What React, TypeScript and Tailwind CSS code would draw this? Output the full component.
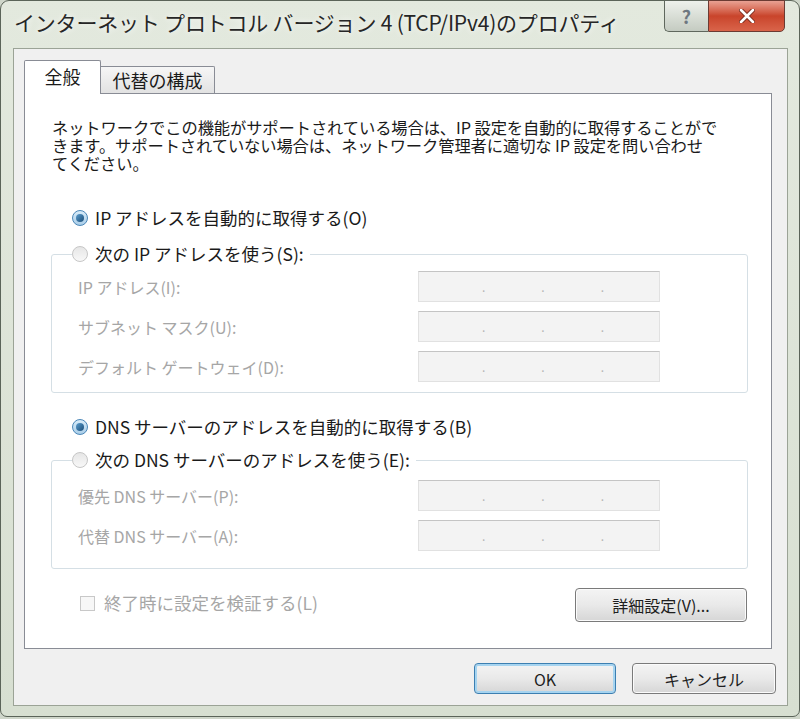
import React from 'react';

const FONT = "font-['Noto_Sans_CJK_JP','Noto_Sans',sans-serif]";

const Radio: React.FC<{ checked?: boolean }> = ({ checked }) =>
    checked ? (
        <span className="flex h-[16px] w-[16px] shrink-0 items-center justify-center rounded-full border border-[#4b87b8] bg-gradient-to-b from-[#d8ecf9] to-[#a9cde8]">
            <span className="h-[8px] w-[8px] rounded-full bg-gradient-to-br from-[#5a9ccc] to-[#1b4f7a]"></span>
        </span>
    ) : (
        <span className="h-[16px] w-[16px] shrink-0 rounded-full border border-[#c6c6c6] bg-gradient-to-b from-[#e6e6e6] to-[#f8f8f8]"></span>
    );

const IpBox: React.FC = () => (
    <div className="flex h-[31px] w-[242px] items-center border border-[#e1e1e1] border-t-[#c4c4c4] bg-[#f3f3f3] text-[12px] text-[#b5b5b5]">
        <span className="ml-[63px]">.</span>
        <span className="ml-[56px]">.</span>
        <span className="ml-[56px]">.</span>
    </div>
);

const Field: React.FC<{ label: string }> = ({ label }) => (
    <div className="flex items-center">
        <span className="w-[366px] pl-[26px] text-[16px] text-[#a6a6a6]">{label}</span>
        <IpBox />
    </div>
);

const Button: React.FC<{ label: string; primary?: boolean; className?: string }> = ({ label, primary, className }) => (
    <button
        className={`flex items-center justify-center rounded-[4px] border bg-gradient-to-b from-[#f4f4f4] via-[#e9e9e9] to-[#d6d6d6] text-[16px] text-[#1e1e1e] ${
            primary ? 'border-[#3c7fb1] shadow-[inset_0_0_0_2px_#a6d4f0]' : 'border-[#7a7a7a] shadow-[inset_0_0_0_1px_#fbfbfb]'
        } ${className ?? ''}`}
    >
        {label}
    </button>
);

export default function App() {
    return (
        <div className={`h-[719px] w-[800px] overflow-hidden bg-[#cfd6ca] ${FONT}`}>
            <div className="h-[717px] w-[800px] rounded-t-[9px] rounded-b-[7px] border border-[#5b6459] bg-gradient-to-b from-[#e3e9de] to-[#d7dfd1]">
                {/* title bar */}
                <div className="flex h-[47px] items-start justify-between">
                    <span className="mt-[6px] ml-[13px] whitespace-nowrap text-[21px] leading-[30px] tracking-[-0.2px] text-[#262626] [text-shadow:0_0_6px_#ffffff]">
                        インターネット プロトコル バージョン 4 (TCP/IPv4)のプロパティ
                    </span>
                    <div className="mr-[14px] flex h-[32px] -mt-px">
                        <div className="flex w-[44px] items-center justify-center rounded-bl-[5px] border border-r-0 border-[#5f675d] bg-gradient-to-b from-[#eef1ec] to-[#c4cbc1] text-[18px] font-bold text-[#6e7780]">
                            ?
                        </div>
                        <div className="flex w-[77px] items-center justify-center rounded-br-[5px] border border-[#6b3b33] bg-gradient-to-b from-[#e8a193] via-[#c9442b] to-[#d9644a] text-white">
                            <svg width="16" height="14" viewBox="0 0 16 14">
                                <path d="M2 1 L14 13 M14 1 L2 13" stroke="#7a2a1c" strokeWidth="4.5" strokeLinecap="round" />
                                <path d="M2 1 L14 13 M14 1 L2 13" stroke="#ffffff" strokeWidth="2.6" strokeLinecap="round" />
                            </svg>
                        </div>
                    </div>
                </div>

                {/* client area */}
                <div className="ml-[12px] flex h-[658px] w-[775px] flex-col border border-[#9ba396] bg-[#f0f0f0]">
                    {/* tabs */}
                    <div className="ml-[10px] mt-[11px] flex h-[33px] items-end">
                        <div className="relative z-10 -mb-px flex h-[34px] w-[77px] items-center justify-center rounded-t-[2px] border border-b-0 border-[#898c95] bg-white pb-[2px] text-[18px] text-[#1a1a1a]">
                            全般
                        </div>
                        <div className="flex h-[27px] w-[114px] items-center justify-center rounded-tr-[2px] border border-b-0 border-l-0 border-[#898c95] bg-gradient-to-b from-[#f6f6f6] to-[#e2e2e2] text-[18px] text-[#1a1a1a]">
                            代替の構成
                        </div>
                    </div>

                    {/* tab panel */}
                    <div className="ml-[10px] flex h-[556px] w-[748px] flex-col border border-[#898c95] bg-white text-[17.5px] text-[#1a1a1a]">
                        <p className="ml-[27px] mt-[24px] text-[16.3px] leading-[18px] tracking-[-0.1px]">
                            <span className="block whitespace-nowrap">ネットワークでこの機能がサポートされている場合は、IP 設定を自動的に取得することがで</span>
                            <span className="block whitespace-nowrap">きます。サポートされていない場合は、ネットワーク管理者に適切な IP 設定を問い合わせ</span>
                            <span className="block whitespace-nowrap">てください。</span>
                        </p>

                        <div className="ml-[26px] flex w-[697px] flex-col">
                            <div className="mt-[35px] flex h-[22px] items-center gap-[7px] pl-[21px]">
                                <Radio checked />
                                <span>IP アドレスを自動的に取得する(O)</span>
                            </div>

                            <fieldset className="mt-[14px] rounded-[3px] border border-[#d5dfe5] pb-[10px]">
                                <legend className="ml-[20px] flex h-[22px] items-center gap-[7px] pr-[6px]">
                                    <Radio />
                                    <span>次の IP アドレスを使う(S):</span>
                                </legend>
                                <div className="mt-[6px] flex flex-col gap-[9px]">
                                    <Field label="IP アドレス(I):" />
                                    <Field label="サブネット マスク(U):" />
                                    <Field label="デフォルト ゲートウェイ(D):" />
                                </div>
                            </fieldset>

                            <div className="mt-[23px] flex h-[22px] items-center gap-[7px] pl-[21px]">
                                <Radio checked />
                                <span>DNS サーバーのアドレスを自動的に取得する(B)</span>
                            </div>

                            <fieldset className="mt-[11px] rounded-[3px] border border-[#d5dfe5] pb-[17px]">
                                <legend className="ml-[20px] flex h-[22px] items-center gap-[7px] pr-[6px]">
                                    <Radio />
                                    <span>次の DNS サーバーのアドレスを使う(E):</span>
                                </legend>
                                <div className="mt-[9px] flex flex-col gap-[9px]">
                                    <Field label="優先 DNS サーバー(P):" />
                                    <Field label="代替 DNS サーバー(A):" />
                                </div>
                            </fieldset>

                            <div className="mt-[19px] flex items-center justify-between">
                                <div className="-mt-[4px] flex items-center gap-[9px] pl-[29px] text-[#a6a6a6]">
                                    <span className="h-[15px] w-[15px] border border-[#c8c8c8] bg-[#f7f7f7]"></span>
                                    <span>終了時に設定を検証する(L)</span>
                                </div>
                                <Button label="詳細設定(V)..." className="mr-[1px] h-[34px] w-[172px]" />
                            </div>
                        </div>
                    </div>

                    {/* dialog buttons */}
                    <div className="mr-[11px] mt-[14px] flex justify-end gap-[16px]">
                        <Button label="OK" primary className="h-[31px] w-[142px]" />
                        <Button label="キャンセル" className="h-[31px] w-[144px]" />
                    </div>
                </div>
            </div>
        </div>
    );
}
